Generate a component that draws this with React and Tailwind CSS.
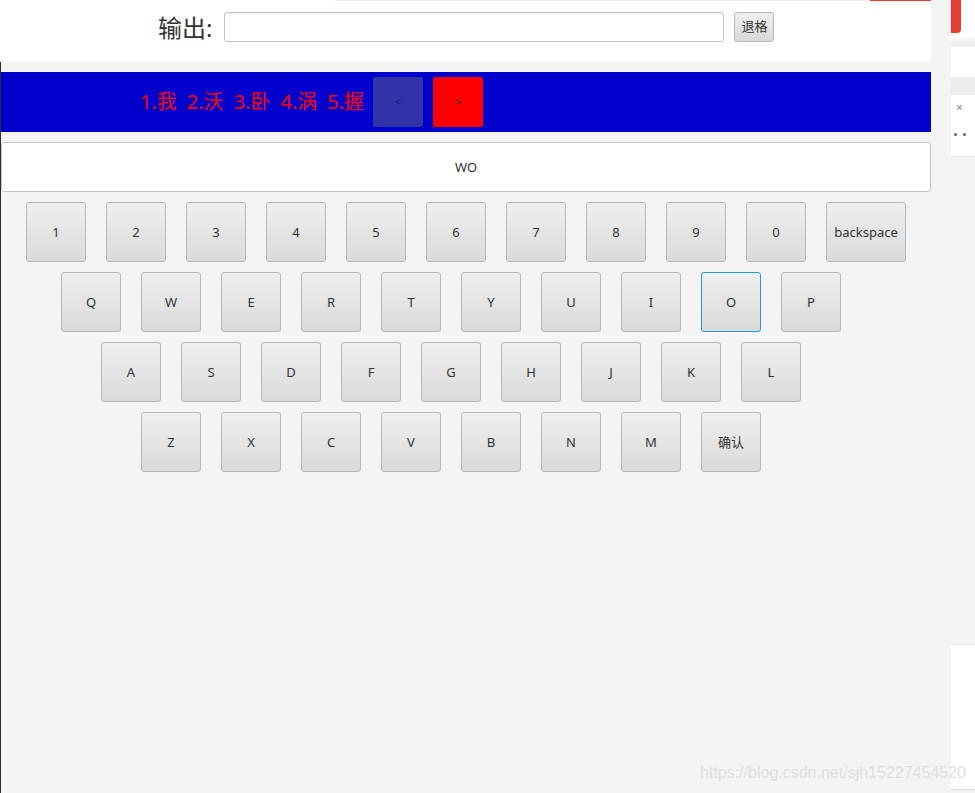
import React from "react";

const font = { fontFamily: '"Noto Sans", "Noto Sans CJK SC", sans-serif' };

function Key({ label, wide, focused }) {
  return (
    <div
      className={`${wide ? "w-[80px]" : "w-[60px]"} h-[60px] shrink-0 flex items-center justify-center pt-[2px] rounded-[3px] border bg-gradient-to-b from-[#efefef] to-[#dadada] text-[13px] text-[#333333] ${
        focused ? "border-[#1ba1d8]" : "border-[#b8b8b8]"
      }`}
    >
      {label}
    </div>
  );
}

export default function App() {
  const row1 = ["1", "2", "3", "4", "5", "6", "7", "8", "9", "0"];
  const row2 = ["Q", "W", "E", "R", "T", "Y", "U", "I", "O", "P"];
  const row3 = ["A", "S", "D", "F", "G", "H", "J", "K", "L"];
  const row4 = ["Z", "X", "C", "V", "B", "N", "M", "确认"];

  return (
    <div className="relative w-[975px] h-[793px] flex bg-white overflow-hidden" style={font}>
      {/* main window */}
      <div className="w-[951px] shrink-0 h-full flex flex-col bg-[#f4f4f4]">
        {/* top output row */}
        <div className="h-[62px] flex shrink-0">
          <div className="w-[931px] h-full bg-white flex items-start pt-[12px]">
            <div className="ml-[158px] h-[30px] flex items-center text-[24px] text-[#333333] leading-none pt-[2px]">输出:</div>
            <div className="ml-[12px] w-[500px] h-[30px] rounded-[3px] border border-[#c2c2c2] bg-white shadow-[inset_0_1px_1px_rgba(0,0,0,0.06)]"></div>
            <div className="ml-[10px] w-[40px] h-[30px] rounded-[3px] border border-[#b8b8b8] bg-gradient-to-b from-[#efefef] to-[#d9d9d9] flex items-center justify-center text-[13px] text-[#333333]">
              退格
            </div>
          </div>
        </div>
        {/* lower section */}
        <div className="flex-1 flex flex-col border-l border-[#2e2e2e]">
          <div className="mt-[10px] w-[930px] h-[60px] bg-[#0000cc] flex items-center">
            <div className="ml-[139px] text-[20px] text-[#ff0000] leading-none flex gap-[10px]">
              <span>1.我</span>
              <span>2.沃</span>
              <span>3.卧</span>
              <span>4.涡</span>
              <span>5.握</span>
            </div>
            <div className="ml-[9px] w-[50px] h-[50px] rounded-[2px] bg-[#3232a8] flex items-center justify-center text-[11px] text-[#1a1a80]">
              &lt;
            </div>
            <div className="ml-[10px] w-[50px] h-[50px] rounded-[2px] bg-[#ff0000] flex items-center justify-center text-[11px] text-[#333333]">
              &gt;
            </div>
          </div>
          <div className="mt-[10px] w-[930px] h-[50px] rounded-[3px] border border-[#c4c4c4] bg-white flex items-center justify-center pt-[2px] text-[13px] text-[#333333]">
            WO
          </div>
          <div className="mt-[10px] flex flex-col gap-[10px]">
            <div className="flex gap-[20px] pl-[25px]">
              {row1.map((k) => (
                <Key key={k} label={k} />
              ))}
              <Key label="backspace" wide />
            </div>
            <div className="flex gap-[20px] pl-[60px]">
              {row2.map((k) => (
                <Key key={k} label={k} focused={k === "O"} />
              ))}
            </div>
            <div className="flex gap-[20px] pl-[100px]">
              {row3.map((k) => (
                <Key key={k} label={k} />
              ))}
            </div>
            <div className="flex gap-[20px] pl-[140px]">
              {row4.map((k) => (
                <Key key={k} label={k} />
              ))}
            </div>
          </div>
        </div>
      </div>

      {/* right background strip */}
      <div className="w-[24px] shrink-0 h-full flex flex-col bg-white">
        <div className="h-[33px] shrink-0 flex">
          <div className="w-[10px] h-full bg-[#e53d30] rounded-br-[4px]"></div>
        </div>
        <div className="h-[5px] shrink-0 bg-white"></div>
        <div className="h-[9px] shrink-0 bg-gradient-to-b from-[#f6f6f6] to-[#ececec]"></div>
        <div className="h-[30px] shrink-0 bg-white"></div>
        <div className="h-[18px] shrink-0 bg-[#ededed]"></div>
        <div className="h-[62px] shrink-0 bg-white border-b border-[#e3e3e3] relative">
          <div className="absolute left-[5px] top-[7px] text-[12px] leading-none text-[#888888]">×</div>
          <div className="absolute left-[3px] top-[38px] flex gap-[6px]">
            <div className="w-[3px] h-[3px] rounded-full bg-[#666666]"></div>
            <div className="w-[3px] h-[3px] rounded-full bg-[#666666]"></div>
          </div>
        </div>
        <div className="h-[488px] shrink-0 bg-[#f4f4f4] border-b border-[#e8e8e8]"></div>
        <div className="h-[145px] shrink-0 bg-white border-b border-[#d8d8d8]"></div>
        <div className="flex-1 bg-[#f4f4f4]"></div>
      </div>

      {/* thin background lines peeking above window */}
      <div className="absolute top-0 left-[335px] w-[535px] h-[1px] bg-[#ececec]"></div>
      <div className="absolute top-0 left-[870px] w-[61px] h-[1px] bg-[#e53d30]"></div>

      {/* watermark */}
      <div
        className="absolute left-[700px] top-[765px] text-[16px] text-[#e0e0e0] leading-none"
        style={{ fontFamily: '"Liberation Sans", Arial, sans-serif' }}
      >
        https://blog.csdn.net/sjh15227454520
      </div>
    </div>
  );
}
